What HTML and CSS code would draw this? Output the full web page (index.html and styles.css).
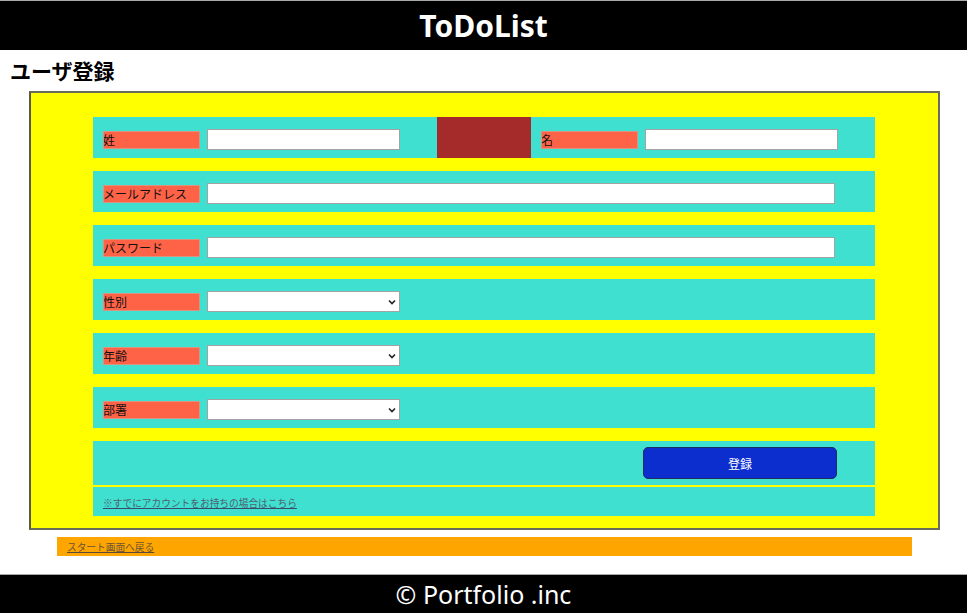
FILE: index.html
```html
<!DOCTYPE html>
<html lang="ja">
<head>
<meta charset="utf-8">
<title>ToDoList</title>
<link rel="stylesheet" href="styles.css">
</head>
<body>
<header class="site-header">ToDoList</header>
<h2 class="page-title">ユーザ登録</h2>
<form class="reg-box">
  <div class="row row-name">
    <label class="lbl">姓</label>
    <input class="inp inp-short" type="text">
    <div class="spacer-block"></div>
    <label class="lbl">名</label>
    <input class="inp inp-short" type="text">
  </div>
  <div class="row">
    <label class="lbl">メールアドレス</label>
    <input class="inp inp-long" type="text">
  </div>
  <div class="row">
    <label class="lbl">パスワード</label>
    <input class="inp inp-long" type="password">
  </div>
  <div class="row">
    <label class="lbl">性別</label>
    <span class="sel-wrap"><select class="sel"><option></option></select><svg class="chev" width="8" height="6" viewBox="0 0 8 6"><path d="M1 1.5 L4 4.5 L7 1.5" fill="none" stroke="#222" stroke-width="1.6"/></svg></span>
  </div>
  <div class="row">
    <label class="lbl">年齢</label>
    <span class="sel-wrap"><select class="sel"><option></option></select><svg class="chev" width="8" height="6" viewBox="0 0 8 6"><path d="M1 1.5 L4 4.5 L7 1.5" fill="none" stroke="#222" stroke-width="1.6"/></svg></span>
  </div>
  <div class="row">
    <label class="lbl">部署</label>
    <span class="sel-wrap"><select class="sel"><option></option></select><svg class="chev" width="8" height="6" viewBox="0 0 8 6"><path d="M1 1.5 L4 4.5 L7 1.5" fill="none" stroke="#222" stroke-width="1.6"/></svg></span>
  </div>
  <div class="row row-btn">
    <button class="btn" type="button">登録</button>
  </div>
  <div class="row row-link">
    <a class="small-link" href="#">※すでにアカウントをお持ちの場合はこちら</a>
  </div>
</form>
<div class="back-bar"><a class="back-link" href="#">スタート画面へ戻る</a></div>
<footer class="site-footer">© Portfolio .inc</footer>
</body>
</html>
```

FILE: styles.css
```css
html, body {
  margin: 0;
  padding: 0;
  background: #fff;
}
body {
  font-family: "Noto Sans CJK JP", "Noto Sans", sans-serif;
  color: #000;
}
.site-header {
  height: 49px;
  border-top: 1px solid #a8a8a8;
  background: #000;
  color: #fff;
  text-align: center;
  font-family: "Noto Sans", "Noto Sans CJK JP", sans-serif;
  font-weight: bold;
  font-size: 30px;
  line-height: 49px;
}
.page-title {
  margin: 8px 0 9px 10px;
  font-size: 21px;
  line-height: 24px;
  font-weight: bold;
}
.reg-box {
  box-sizing: border-box;
  width: 911px;
  margin: 0 0 0 29px;
  padding: 24px 0 12px;
  background: #ffff00;
  border: 2px solid #6b6b5a;
  border-left-color: #5a5a4a;
}
.row {
  box-sizing: border-box;
  width: 782px;
  height: 41px;
  margin: 0 0 13px 62px;
  padding: 4px 0 0 10px;
  background: #40e0d0;
  display: flex;
  align-items: center;
}
.lbl {
  box-sizing: border-box;
  width: 97px;
  height: 18px;
  background: #ff6347;
  border: 1px solid #d8947e;
  font-size: 12px;
  line-height: 16px;
  color: #111;
  white-space: nowrap;
  overflow: hidden;
  text-indent: -1px;
  margin-right: 7px;
}
.inp {
  box-sizing: border-box;
  height: 21px;
  border: 1px solid #a3a3a3;
  background: #fff;
  padding: 0 2px;
  margin: 0;
}
.inp-short { width: 193px; }
.inp-long { width: 628px; }
.row-name {
  padding-top: 0;
  align-items: center;
}
.row-name .lbl, .row-name .inp {
  margin-top: 4px;
}
.spacer-block {
  align-self: stretch;
  width: 94px;
  margin: 0 10px 0 37px;
  background: #a52a2a;
}
.sel-wrap {
  position: relative;
  display: block;
  width: 193px;
  height: 21px;
}
.sel {
  display: block;
  box-sizing: border-box;
  width: 193px;
  height: 21px;
  margin: 0;
  border: 1px solid #a3a3a3;
  border-radius: 0;
  background: #fff;
  -webkit-appearance: none;
  appearance: none;
  outline: none;
}
.chev {
  position: absolute;
  right: 4px;
  top: 8px;
}
.row-btn {
  height: 44px;
  margin-bottom: 2px;
  padding: 0 38px 0 0;
  justify-content: flex-end;
}
.btn {
  box-sizing: border-box;
  width: 194px;
  height: 32px;
  background: #0d2ecf;
  border: 1px solid #1b2d63;
  border-radius: 5px;
  color: #fff;
  font-family: "Noto Sans CJK JP", sans-serif;
  font-size: 12px;
  padding: 0;
}
.row-link {
  height: 29px;
  margin-bottom: 0;
  padding: 2px 0 0 10px;
}
.small-link {
  font-size: 9.7px;
  color: #4f6070;
  text-decoration: underline;
  text-decoration-color: #3b4a66;
}
.back-bar {
  box-sizing: border-box;
  width: 855px;
  height: 19px;
  margin: 7px 0 0 57px;
  padding-left: 10px;
  background: #ffa500;
  display: flex;
  align-items: center;
}
.back-link {
  font-size: 9.7px;
  color: #6a5436;
  text-decoration: underline;
  text-decoration-color: #5a4a3a;
}
.site-footer {
  margin-top: 18px;
  height: 37px;
  border-top: 1px solid #a8a8a8;
  background: #000;
  color: #fff;
  text-align: center;
  font-family: "Noto Sans", sans-serif;
  font-size: 25px;
  line-height: 37px;
  padding-top: 1px;
  box-sizing: content-box;
}
```
